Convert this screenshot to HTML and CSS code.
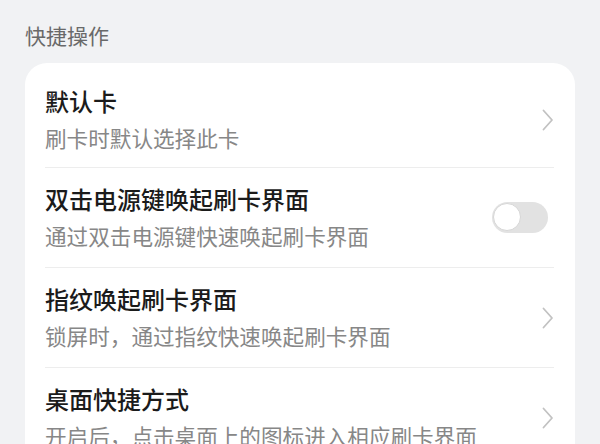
FILE: index.html
```html
<!DOCTYPE html>
<html lang="zh-CN">
<head>
<meta charset="utf-8">
<link rel="stylesheet" href="styles.css">
</head>
<body>
<div class="page">
  <div class="section-title">快捷操作</div>
  <div class="card">
    <div class="row first">
      <div class="text">
        <div class="title">默认卡</div>
        <div class="sub">刷卡时默认选择此卡</div>
      </div>
      <svg class="chev" width="12" height="22" viewBox="0 0 12 22"><polyline points="1.5,1.5 10,11 1.5,20.5" fill="none" stroke="#c2c2c2" stroke-width="1.8" stroke-linecap="round" stroke-linejoin="round"/></svg>
    </div>
    <div class="row">
      <div class="text">
        <div class="title">双击电源键唤起刷卡界面</div>
        <div class="sub">通过双击电源键快速唤起刷卡界面</div>
      </div>
      <div class="toggle"><div class="knob"></div></div>
    </div>
    <div class="row">
      <div class="text">
        <div class="title">指纹唤起刷卡界面</div>
        <div class="sub">锁屏时，通过指纹快速唤起刷卡界面</div>
      </div>
      <svg class="chev" width="12" height="22" viewBox="0 0 12 22"><polyline points="1.5,1.5 10,11 1.5,20.5" fill="none" stroke="#c2c2c2" stroke-width="1.8" stroke-linecap="round" stroke-linejoin="round"/></svg>
    </div>
    <div class="row">
      <div class="text">
        <div class="title">桌面快捷方式</div>
        <div class="sub">开启后，点击桌面上的图标进入相应刷卡界面</div>
      </div>
      <svg class="chev" width="12" height="22" viewBox="0 0 12 22"><polyline points="1.5,1.5 10,11 1.5,20.5" fill="none" stroke="#c2c2c2" stroke-width="1.8" stroke-linecap="round" stroke-linejoin="round"/></svg>
    </div>
  </div>
</div>
</body>
</html>
```

FILE: styles.css
```css
html, body {
  margin: 0;
  padding: 0;
  background: #f1f2f4;
  font-family: "Noto Sans CJK SC", "Noto Sans", sans-serif;
}
.page {
  width: 600px;
  height: 444px;
  overflow: hidden;
}
.section-title {
  padding: 21px 25px 14px;
  font-size: 21px;
  line-height: 28px;
  color: #696969;
}
.card {
  margin: 0 25px;
  background: #ffffff;
  border-radius: 22px;
  padding-top: 9px;
}
.row {
  height: 99px;
  margin: 0 21px 0 20px;
  border-bottom: 1px solid #ededed;
  display: flex;
  align-items: center;
  justify-content: space-between;
}
.row.first {
  height: 95px;
}
.text {
  display: flex;
  flex-direction: column;
}
.title {
  font-size: 24px;
  line-height: 36px;
  color: #1b1b1b;
  font-weight: 500;
}
.sub {
  font-size: 21.6px;
  line-height: 37px;
  color: #878787;
}
.chev {
  display: block;
}
.toggle {
  width: 56px;
  height: 31px;
  border-radius: 16px;
  background: #e2e2e2;
  margin-right: 6px;
  position: relative;
}
.knob {
  position: absolute;
  left: 1px;
  top: 1px;
  width: 26px;
  height: 26px;
  border-radius: 50%;
  background: #ffffff;
  border: 1.5px solid #d6d6d6;
}
```
